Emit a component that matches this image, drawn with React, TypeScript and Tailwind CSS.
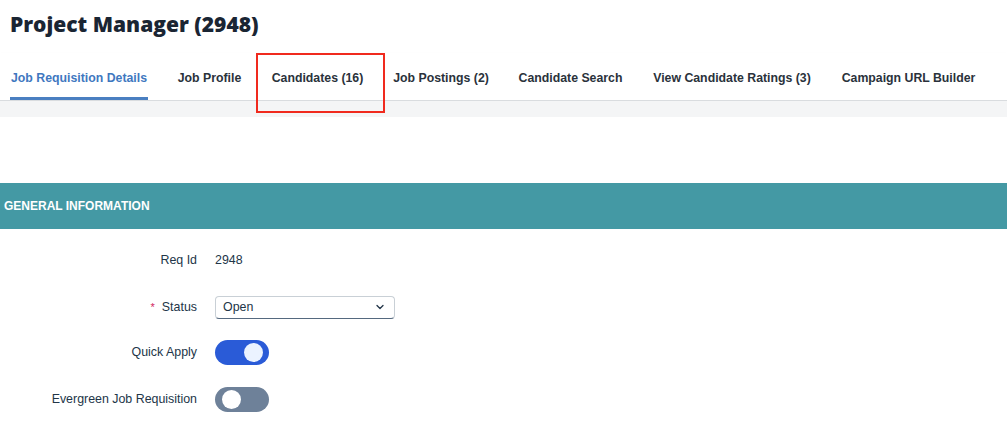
import React from "react";
import { ChevronDown } from "lucide-react";

const tabs: { t: string; w: string }[] = [
  { t: "Job Requisition Details", w: "w-[138px]" },
  { t: "Job Profile", w: "w-[65px]" },
  { t: "Candidates (16)", w: "w-[93px]" },
  { t: "Job Postings (2)", w: "w-[96px]" },
  { t: "Candidate Search", w: "w-[105px]" },
  { t: "View Candidate Ratings (3)", w: "w-[160px]" },
  { t: "Campaign URL Builder", w: "w-[135px]" },
];

function Toggle({ on }: { on: boolean }) {
  return (
    <div
      className={
        on
          ? "w-[54px] h-[25px] rounded-full bg-[#2a5bd7] flex items-center justify-end px-[6px]"
          : "w-[54px] h-[25px] rounded-full bg-[#6e8199] flex items-center justify-start px-[7px]"
      }
    >
      <div
        className={
          on
            ? "w-[19px] h-[19px] rounded-full bg-[#ebf3ff]"
            : "w-[19px] h-[19px] rounded-full bg-white"
        }
      />
    </div>
  );
}

function Row({
  label,
  required,
  children,
  className,
}: {
  label: string;
  required?: boolean;
  children: React.ReactNode;
  className?: string;
}) {
  return (
    <div className={"flex items-center h-[26px] " + (className ?? "")}>
      <div className="w-[197px] flex justify-end items-center text-[12.4px] text-[#223548] whitespace-nowrap">
        {required && <span className="text-[#d0245e] text-[11px] mr-[7px]">*</span>}
        <span>{label}</span>
      </div>
      <div className="ml-[18px] flex items-center text-[12.4px] text-[#223548]">{children}</div>
    </div>
  );
}

export default function App() {
  return (
    <div
      className="relative w-[1007px] h-[446px] bg-white overflow-hidden"
      style={{ fontFamily: '"Liberation Sans", Arial, sans-serif' }}
    >
      <div className="h-[53px] pl-[10px] pt-[11px]">
        <div
          className="text-[21px] leading-[26px] font-extrabold text-[#1a2533] whitespace-nowrap"
          style={{ fontFamily: '"Open Sans", sans-serif' }}
        >
          Project Manager (2948)
        </div>
      </div>
      <div className="h-[48px] flex items-stretch pl-[10px] gap-[29px] border-b border-[#d9dcdf] shadow-[0_1px_2px_rgba(0,0,0,0.06)]">
        {tabs.map((x, i) => (
          <div
            key={x.t}
            className={
              (i === 0
                ? "flex items-center justify-center text-[12.3px] font-bold text-[#3f78bf] border-b-[3px] border-[#4a7fc1] pt-[6px] whitespace-nowrap "
                : "flex items-center justify-center text-[12.3px] font-bold text-[#2a323b] border-b-[3px] border-transparent pt-[6px] whitespace-nowrap ") + x.w
            }
          >
            {x.t}
          </div>
        ))}
      </div>
      <div className="h-[16px] bg-[#f4f5f6]" />
      <div className="h-[66px]" />
      <div className="h-[46px] bg-[#4499a4] flex items-center pl-[4px]">
        <span className="text-white text-[12px] font-bold">GENERAL INFORMATION</span>
      </div>
      <div className="pt-[18px] flex flex-col">
        <Row label="Req Id">
          <span>2948</span>
        </Row>
        <Row label="Status" required className="mt-[21px]">
          <div className="w-[180px] h-[23px] rounded-[4px] border border-[#c9d0d6] border-b-[#55697f] flex items-center justify-between pl-[7px] pr-[8px] bg-white">
            <span>Open</span>
            <ChevronDown size={12} strokeWidth={2.6} color="#223548" />
          </div>
        </Row>
        <Row label="Quick Apply" className="mt-[19px]">
          <Toggle on />
        </Row>
        <Row label="Evergreen Job Requisition" className="mt-[21px]">
          <Toggle on={false} />
        </Row>
      </div>
      <div className="absolute left-[256px] top-[53px] w-[129px] h-[60px] border-2 border-[#f02a1e]" />
    </div>
  );
}
